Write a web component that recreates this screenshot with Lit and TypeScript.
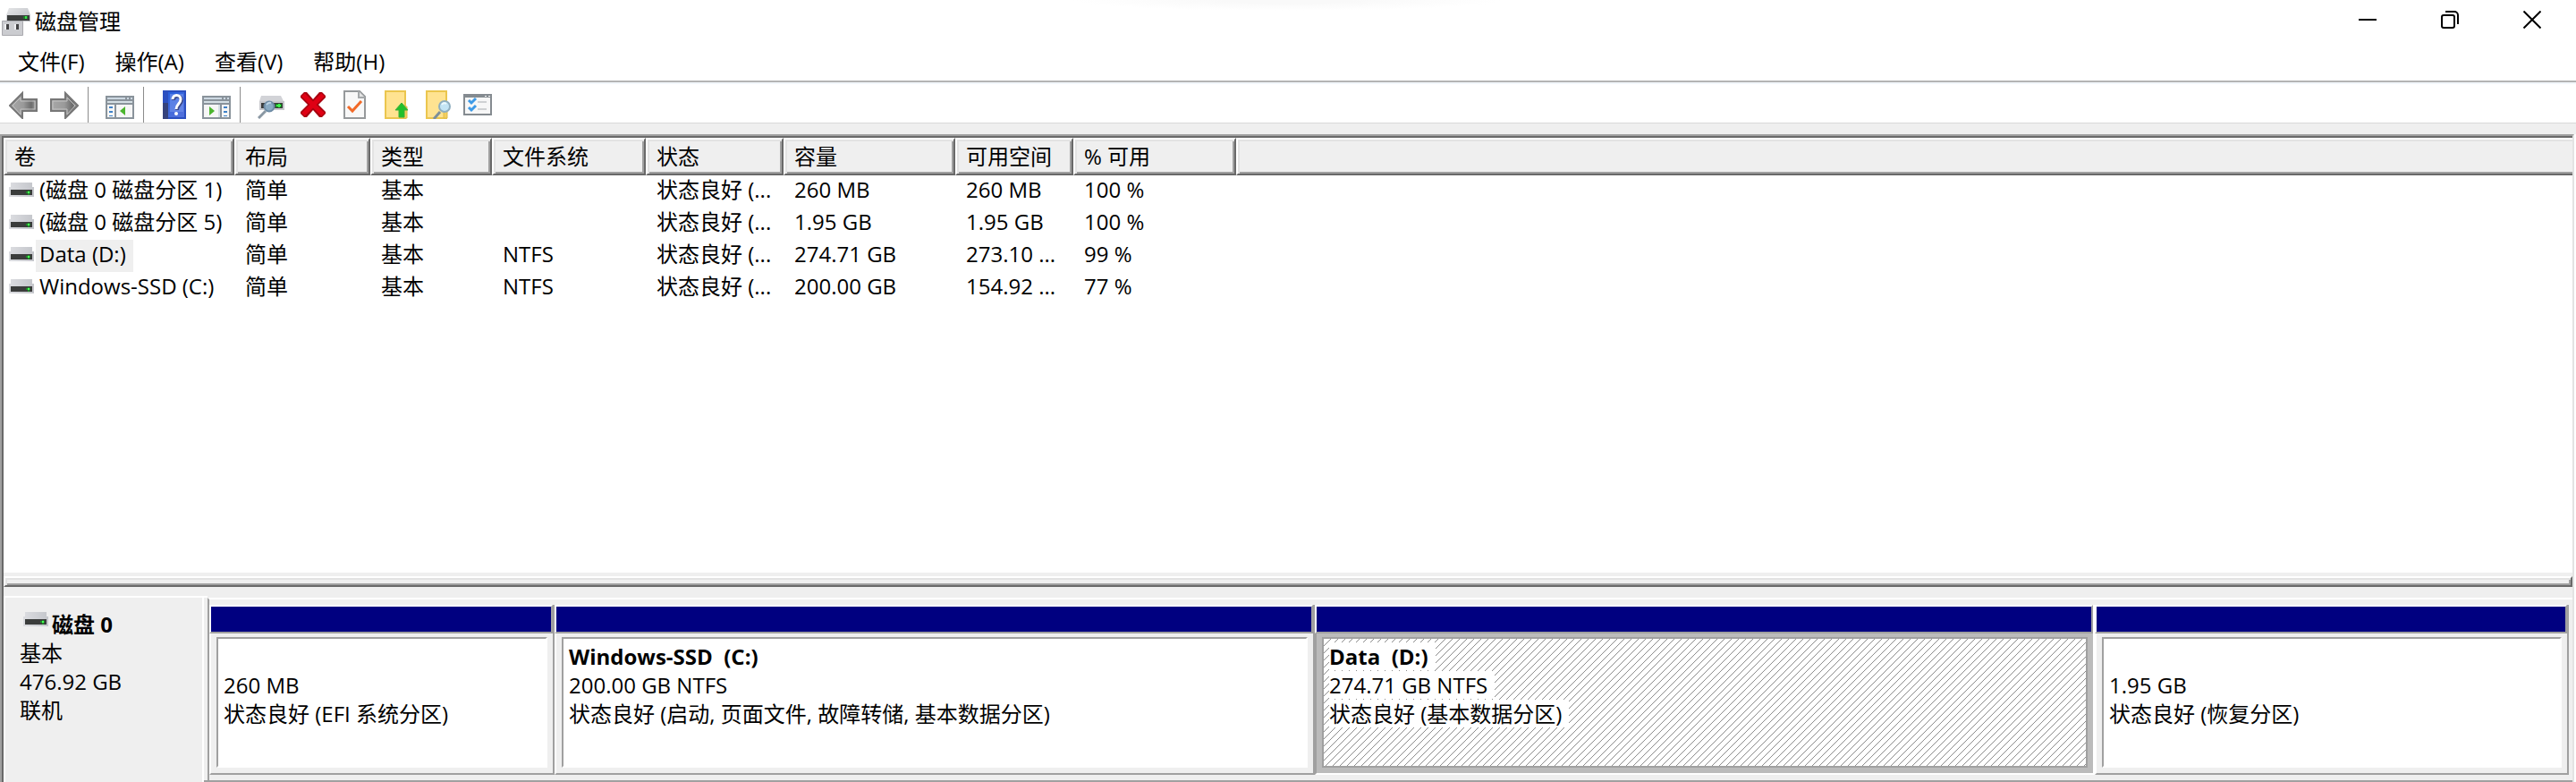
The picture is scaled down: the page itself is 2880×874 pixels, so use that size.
import { LitElement, html, css, svg } from "lit";
import { customElement, property, state } from "lit/decorators.js";
import { classMap } from "lit/directives/class-map.js";

const ICONS: Record<string, unknown> = {
  app: svg`
    <defs><linearGradient id="a" x1="0" y1="0" x2="1" y2="1"><stop offset="0" stop-color="#e4e5e7"/><stop offset="1" stop-color="#b9bbc0"/></linearGradient></defs>
    <path d="M8 2h21l3 8v7H5v-7z" fill="url(#a)"/>
    <path d="M6 10h25v6H6z" fill="#3a3c3b"/>
    <path d="M24 11h5v3h-5z" fill="#1d7a25"/><path d="M26 11h2v3h-2z" fill="#37e04a"/>
    <path d="M.5 16.500h23v16H.5z" fill="#cbccd0" stroke="#a9a9ae"/>
    <path d="M3 20h3v6H3zM14 20h3v6h-3z" fill="#efeff2"/>
    <path d="M5 20h3v6H5zM16 20h3v6h-3z" fill="#454547"/>`,
  back: svg`
    <defs><linearGradient id="g" x1="0" y1="0" x2="1" y2="0"><stop offset="0" stop-color="#a8a8a8"/><stop offset=".5" stop-color="#9a9a9a"/><stop offset=".8" stop-color="#6c6c6c"/><stop offset="1" stop-color="#a4a4a4"/></linearGradient></defs>
    <path d="M1 17 15 3v7h16v13H15v8z" fill="url(#g)" stroke="#777" stroke-width="2"/>
    <path d="M4 17 13 8v4h16v9H13v6z" fill="none" stroke="#c2c2c2"/>`,
  forward: svg`
    <defs><linearGradient id="g" x1="0" y1="0" x2="1" y2="0"><stop offset="0" stop-color="#a4a4a4"/><stop offset=".25" stop-color="#7c7c7c"/><stop offset=".6" stop-color="#9c9c9c"/><stop offset="1" stop-color="#a8a8a8"/></linearGradient></defs>
    <path d="M31 17 17 3v7H1v13h16v8z" fill="url(#g)" stroke="#777" stroke-width="2"/>
    <path d="M28 17 19 8v4H3v9h16v6z" fill="none" stroke="#c2c2c2"/>`,
  tree: svg`
    <path d="M0 6h32v26H0z" fill="#8a939b"/><path d="M2 8h20v2H2zM24 8h2v2h-2zM28 8h2v2h-2z" fill="#cdd8e2"/>
    <path d="M2 12h28v2H2z" fill="#d5dfe5"/><path d="M2 16h8v14H2zM12 16h18v14H12z" fill="#f6f6f6"/>
    <path d="M4 18h4v2H4zM4 23h4v2H4zM4 28h4v1H4z" fill="#3f82c8"/><path d="M22 18v10l-6-5z" fill="#4bb52e"/>`,
  help: svg`
    <defs><linearGradient id="h" x1="0" y1="0" x2=".5" y2="1"><stop offset="0" stop-color="#2860dd"/><stop offset="1" stop-color="#4f6fdc"/></linearGradient></defs>
    <path d="M2 0h26v32H2z" fill="#2b4fc0"/><path d="M8 2h18v28H8z" fill="url(#h)"/><path d="M10 4h15v20H10z" fill="#7898ec" opacity=".55"/>
    <path d="M2 14h6v18H2z" fill="#35427c"/>
    <path d="M14 11c0-6 9-6 9 0 0 5-5 5-5 11" fill="none" stroke="#3c4a8c" stroke-width="4"/>
    <path d="M13 10c0-6 9-6 9 0 0 5-5 5-5 11" fill="none" stroke="#fff" stroke-width="3"/><circle cx="17" cy="26" r="2" fill="#fff"/>`,
  pane: svg`
    <path d="M0 6h32v26H0z" fill="#8a939b"/><path d="M2 8h20v2H2zM24 8h2v2h-2zM28 8h2v2h-2z" fill="#cdd8e2"/>
    <path d="M2 12h28v2H2z" fill="#d5dfe5"/><path d="M2 16h18v14H2zM22 16h8v14h-8z" fill="#f6f6f6"/><path d="M18 16h2v14h-2z" fill="#d5dfe5"/>
    <path d="M24 18h4v2h-4zM24 23h4v2h-4zM24 28h4v1h-4z" fill="#3f82c8"/><path d="M8 18v10l6-5z" fill="#4bb52e"/>`,
  rescan: svg`
    <path d="M4 6h22l3 6v2H2v-2z" fill="#d2d3d7"/><path d="M2 12h28v10H2z" fill="#c7c8cc"/><path d="M4 14h24v6H4z" fill="#3c3e3d"/>
    <path d="M20 15h7v4h-7z" fill="#157a1d"/><path d="M21 16h5v2h-5zM23 15h2v4h-2z" fill="#3ff04c"/>
    <path d="m9 23-8 8" stroke="#8a98a3" stroke-width="3"/><circle cx="13" cy="18" r="5.500" fill="#8aabc4" stroke="#6d8ba4" stroke-width="2"/><path d="M10 16q2-3 5-2" stroke="#bcd3e4" stroke-width="2" fill="none"/>`,
  remove: svg`
    <path d="M2 6 6 2h3l7 8 7-8h3l4 4v2l-8 8 8 8v2l-4 4h-3l-7-8-7 8H6l-4-4v-2l8-8-8-8z" fill="#a8000f"/>
    <path d="m5 5 22 22M27 5 5 27" stroke="#e00014" stroke-width="5"/>`,
  properties: svg`
    <path d="M5 1h17l6 6v24H5z" fill="#f8f8f8" stroke="#96999b" stroke-width="2"/><path d="M21 1v7h7" fill="#e4e4e4" stroke="#a5a8aa" stroke-width="2"/>
    <path d="m9 18 5 5 10-11" fill="none" stroke="#f26a28" stroke-width="3"/>`,
  folderUp: svg`
    <path d="M5 1h22v30H5z" fill="#ffe391" stroke="#ebc64e" stroke-width="2"/><path d="M25 18h4v13h-4z" fill="#f3cf5f" stroke="#e0bb47"/>
    <path d="m23 14 7 8h-4v8h-6v-8h-4z" fill="#22c02b" stroke="#3fae3a"/>`,
  folderFind: svg`
    <path d="M5 1h22v30H5z" fill="#ffe391" stroke="#ebc64e" stroke-width="2"/><path d="M24 20h4v11h-4z" fill="#f3cf5f" stroke="#e0bb47"/>
    <path d="m20 24-7 8" stroke="#7d8f9c" stroke-width="3"/><circle cx="25" cy="18" r="6" fill="#c3e4f4" stroke="#8faebf" stroke-width="2"/><path d="M22 16q2-3 5-1" stroke="#edfaff" stroke-width="2" fill="none"/>`,
  list: svg`
    <path d="M0 4h32v24H0z" fill="#858b90"/><path d="M2 8h28v18H2z" fill="#f7f7f7"/><path d="M24 6h2v1h-2zM28 6h2v1h-2z" fill="#fff"/>
    <path d="m6 11 3 3 5-5M6 19l3 3 5-5" fill="none" stroke="#3d9ae6" stroke-width="3"/><path d="M16 12h10v2H16zM16 20h10v2H16z" fill="#cfd1d3"/>`,
  drive: svg`
    <defs><linearGradient id="d" x1="0" y1="0" x2="1" y2="0"><stop offset="0" stop-color="#dcdde1"/><stop offset="1" stop-color="#c4c6cb"/></linearGradient></defs>
    <path d="M2 0h24v5h2v11H0V5h2z" fill="url(#d)"/><path d="M2 8h24v6H2z" fill="#3b3d3c"/>
    <path d="M19 10h5v2h-5zM21 9h2v5h-2z" fill="#1e8a28"/><path d="M21 10h2v2h-2z" fill="#4dff58"/>`,
  minimize: svg`<path d="M0 9h20v2H0z" fill="#000"/>`,
  restore: svg`<g fill="none" stroke="#000" stroke-width="2"><rect x="1" y="5" width="14" height="14" rx="2"/><path d="M5 1h10a4 4 0 0 1 4 4v10"/></g>`,
  close: svg`<path d="m.5.500 19 19m0-19-19 19" stroke="#000" stroke-width="2" fill="none"/>`,
};

const icon = (name: string, w = 32, h = 32) =>
  html`<svg width=${w} height=${h} viewBox="0 0 ${w} ${h}" aria-hidden="true">${ICONS[name]}</svg>`;

const MENUS = ["文件(F)", "操作(A)", "查看(V)", "帮助(H)"];

const TOOLS: [string, string][][] = [
  [["back", "后退"], ["forward", "前进"]],
  [["tree", "显示/隐藏控制台树"]],
  [["help", "帮助"], ["pane", "显示/隐藏操作窗格"]],
  [["rescan", "重新扫描"], ["remove", "删除"], ["properties", "属性"], ["folderUp", "打开"], ["folderFind", "浏览"], ["list", "设置"]],
];

const COLUMNS: [string, number][] = [
  ["卷", 258], ["布局", 152], ["类型", 136], ["文件系统", 172], ["状态", 154], ["容量", 192], ["可用空间", 132], ["% 可用", 182],
];

const VOLUMES = [
  ["(磁盘 0 磁盘分区 1)", "简单", "基本", "", "状态良好 (...", "260 MB", "260 MB", "100 %"],
  ["(磁盘 0 磁盘分区 5)", "简单", "基本", "", "状态良好 (...", "1.95 GB", "1.95 GB", "100 %"],
  ["Data (D:)", "简单", "基本", "NTFS", "状态良好 (...", "274.71 GB", "273.10 ...", "99 %"],
  ["Windows-SSD (C:)", "简单", "基本", "NTFS", "状态良好 (...", "200.00 GB", "154.92 ...", "77 %"],
];

const PARTITIONS = [
  { name: "", size: "260 MB", status: "状态良好 (EFI 系统分区)", share: 384 },
  { name: "Windows-SSD  (C:)", size: "200.00 GB NTFS", status: "状态良好 (启动, 页面文件, 故障转储, 基本数据分区)", share: 848 },
  { name: "Data  (D:)", size: "274.71 GB NTFS", status: "状态良好 (基本数据分区)", share: 870 },
  { name: "", size: "1.95 GB", status: "状态良好 (恢复分区)", share: 528 },
];

@customElement("volume-table")
class VolumeTable extends LitElement {
  @property({ type: Number }) selected = 2;

  static styles = css`
    :host { display: block; background: #fff; }
    table { width: 100%; border-collapse: separate; border-spacing: 0; table-layout: fixed; }
    th, td { box-sizing: border-box; padding: 0 0 0 12px; text-align: left; font-weight: 400; white-space: nowrap; }
    th {
      height: 42px;
      padding-left: 10px;
      background: #efefef;
      border: 2px solid;
      border-color: #fff #696969 #696969 #fff;
      box-shadow: inset 2px 2px #e3e3e3, inset -2px -2px #a0a0a0;
    }
    th:last-child { border-right: 0; box-shadow: inset 2px 2px #e3e3e3, inset 0 -2px #a0a0a0; }
    td { height: 36px; line-height: 32px; vertical-align: top; }
    td:first-child { padding-left: 6px; }
    .name { display: flex; align-items: center; gap: 2px; }
    .name svg { flex: none; margin-bottom: 4px; }
    .label { height: 36px; padding: 0 8px 0 4px; }
    .label.selected { background: #efefef; }
  `;

  render() {
    return html`
      <table>
        <colgroup>${COLUMNS.map(([, w]) => html`<col style="width:${w}px">`)}<col></colgroup>
        <thead><tr>${COLUMNS.map(([t]) => html`<th scope="col">${t}</th>`)}<th></th></tr></thead>
        <tbody>
          ${VOLUMES.map((row, i) => html`
            <tr>
              ${row.map((text, c) => c === 0
                ? html`<td><div class="name">${icon("drive", 28, 16)}<span class=${classMap({ label: true, selected: i === this.selected })}>${text}</span></div></td>`
                : html`<td>${text}</td>`)}
              <td></td>
            </tr>`)}
        </tbody>
      </table>`;
  }
}

@customElement("disk-map")
class DiskMap extends LitElement {
  @property({ type: Number }) selected = 2;

  static styles = css`
    :host { display: flex; background: #efefef; line-height: 32px; }
    .disk { box-sizing: border-box; flex: none; width: 224px; padding: 14px 0 0 16px; border: 2px solid #fff; border-bottom: 0; }
    .disk-name { display: flex; align-items: flex-start; gap: 4px; font-weight: 700; }
    .disk-name svg { margin: 2px 0 0 4px; }
    .gutter { flex: none; width: 4px; border-top: 2px solid #fff; border-bottom: 2px solid #a0a0a0; }
    .strip {
      flex: 1; min-width: 0; display: flex;
      margin-top: 2px; padding: 6px 4px 6px 0;
      border: solid #a0a0a0; border-width: 2px 0 2px 2px; border-top-color: #fff;
    }
    .partition {
      flex: 1 1 0; min-width: 0; display: flex; flex-direction: column; padding: 0;
      border: 0; border-right: 2px solid #a0a0a0; background: none;
      font: inherit; color: inherit; text-align: left;
    }
    .bar { height: 28px; background: #000080; border: 2px solid; border-color: #fff #a0a0a0 #a0a0a0 #fff; }
    .body { flex: 1; display: flex; padding: 4px 6px 6px; border: solid; border-width: 0 0 2px 2px; border-color: #fff #fff #a0a0a0 #fff; }
    .box { flex: 1; min-width: 0; box-sizing: border-box; height: 146px; padding: 4px 6px 0; background: #fff; border: 2px solid; border-color: #a0a0a0 #fff #fff #a0a0a0; overflow: hidden; }
    .line { display: block; width: fit-content; height: 31px; margin-bottom: 1px; padding-right: 8px; background: #fff; white-space: pre; }
    .title { font-weight: 700; }
    .selected { border-right-color: #fff; }
    .selected .body { background: #bbb; border-color: #fff #fff #fff #a0a0a0; }
    .selected .box {
      border-color: #a0a0a0;
      background: linear-gradient(to bottom right, #fff 46%, #8c8c8c 46% 54%, #fff 54%) 0 0 / 8px 8px;
    }
  `;

  render() {
    return html`
      <section class="disk">
        <div class="disk-name">${icon("drive", 28, 16)}<span>磁盘 0</span></div>
        <div>基本</div>
        <div>476.92 GB</div>
        <div>联机</div>
      </section>
      <div class="gutter"></div>
      <div class="strip">
        ${PARTITIONS.map((p, i) => html`
          <button type="button" class=${classMap({ partition: true, selected: i === this.selected })} style="flex-grow:${p.share}" @click=${() => (this.selected = i)}>
            <div class="bar"></div>
            <div class="body">
              <div class="box">
                <span class="line title">${p.name}</span>
                <span class="line">${p.size}</span>
                <span class="line">${p.status}</span>
              </div>
            </div>
          </button>`)}
      </div>`;
  }
}

@customElement("app-root")
class AppRoot extends LitElement {
  @state() private selected = 2;

  static styles = css`
    :host {
      display: flex; flex-direction: column; min-height: 100vh; overflow: hidden;
      background: #fff; color: #000;
      font: 24px/32px "Open Sans", "Noto Sans CJK SC", sans-serif;
    }
    button { padding: 0; border: 0; background: none; font: inherit; color: inherit; }
    .titlebar { display: flex; height: 48px; background: radial-gradient(closest-side, #f9f9f9 30%, #fff) 50% -12px / 480px 24px no-repeat; }
    .title { flex: 1; display: flex; align-items: center; gap: 5px; padding-left: 2px; margin: 0; font: inherit; }
    .caption { display: flex; align-items: center; justify-content: center; width: 92px; height: 44px; }
    .captions { display: flex; padding-right: 3px; }
    .menu { display: flex; gap: 34px; height: 42px; padding-left: 20px; align-items: center; border-bottom: 2px solid #b4b4b4; }
    .tools { display: flex; height: 40px; padding: 3px 0 0 3px; border-top: 2px solid #f3f8fb; border-bottom: 1px solid #d9d9d9; }
    .group { display: flex; align-items: center; }
    .group + .group::before { content: ""; width: 1px; height: 40px; margin: 0 12px 0 3px; background: #8c8c8c; }
    .tool { display: flex; justify-content: center; align-items: center; width: 46px; height: 40px; }
    .workspace {
      flex: 1; display: flex; flex-direction: column; margin-right: 2px;
      border: 2px solid; border-color: #a0a0a0 #e3e3e3 #efefef #a0a0a0; border-bottom: 0;
    }
    .inner { flex: 1; display: flex; flex-direction: column; border: solid #696969; border-width: 2px 0 0 2px; }
    .spacer { height: 12px; background: #efefef; }
    volume-table { flex: 1; }
    .splitter {
      height: 8px; border: 2px solid; border-color: #fff #696969 #696969 #fff; background: #efefef;
      box-shadow: inset 2px 2px #e3e3e3, inset -2px -2px #a0a0a0, 0 -4px #efefef;
    }
    .gap { height: 10px; background: #efefef; }
    disk-map { height: 208px; }
  `;

  render() {
    return html`
      <header class="titlebar">
        <h1 class="title">${icon("app", 32, 34)}<span>磁盘管理</span></h1>
        <div class="captions">
          ${[["minimize", "最小化"], ["restore", "还原"], ["close", "关闭"]].map(([n, t]) => html`
            <button type="button" class="caption" aria-label=${t}>${icon(n, 20, 20)}</button>`)}
        </div>
      </header>
      <nav class="menu">${MENUS.map((m) => html`<button type="button">${m}</button>`)}</nav>
      <div class="tools" role="toolbar">
        ${TOOLS.map((group) => html`
          <div class="group">${group.map(([n, t]) => html`<button type="button" class="tool" aria-label=${t}>${icon(n)}</button>`)}</div>`)}
      </div>
      <div class="spacer"></div>
      <main class="workspace">
        <div class="inner">
          <volume-table .selected=${this.selected}></volume-table>
          <div class="splitter"></div>
          <div class="gap"></div>
          <disk-map .selected=${this.selected}></disk-map>
        </div>
      </main>`;
  }
}
